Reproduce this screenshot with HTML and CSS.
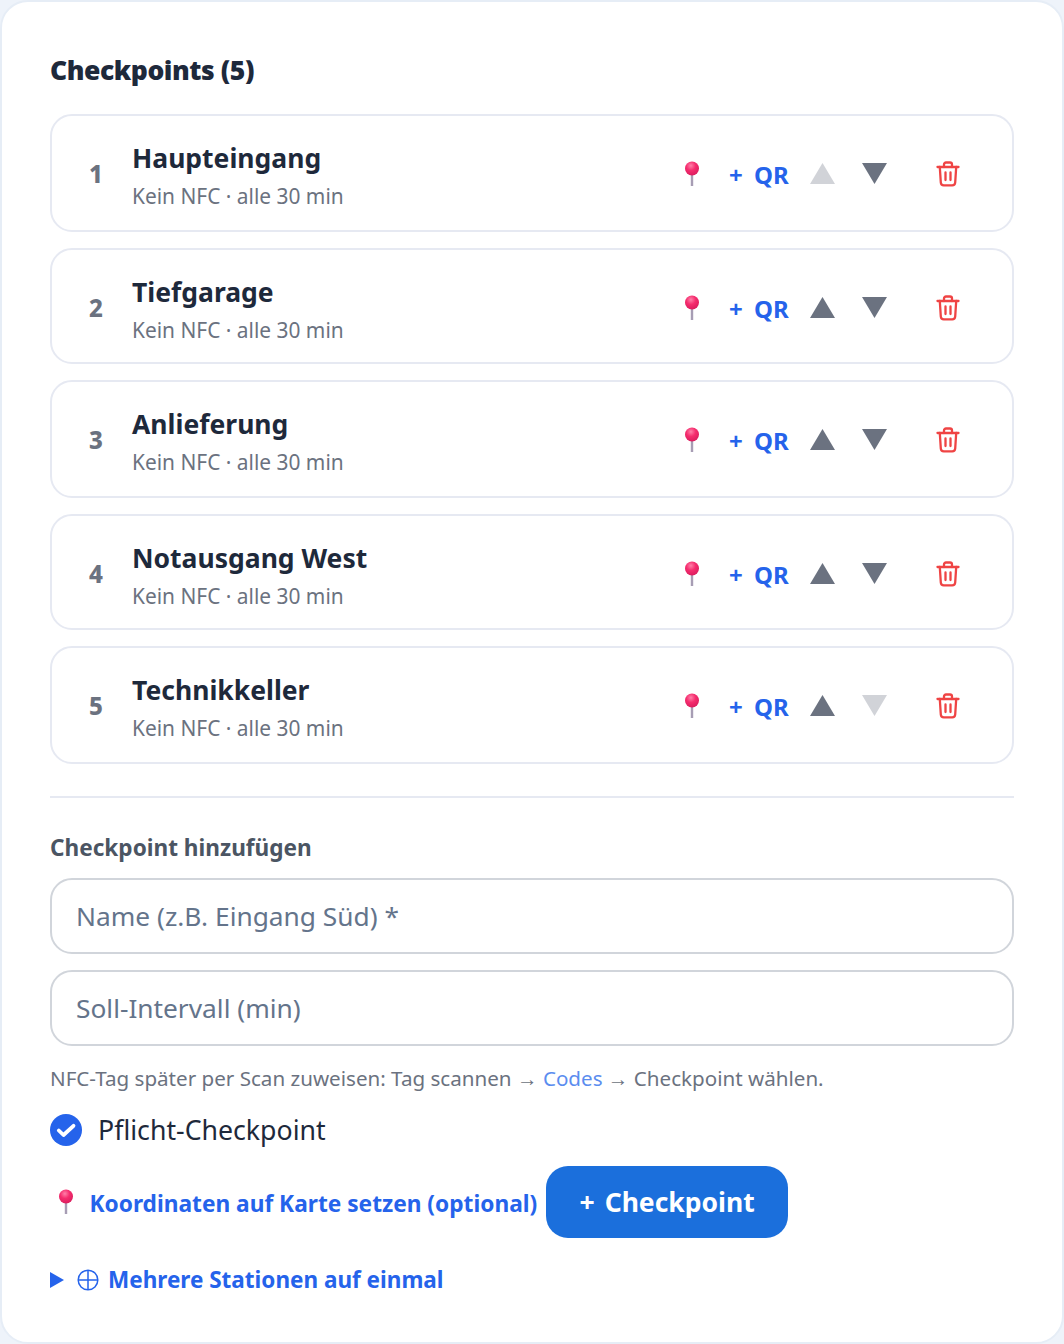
FILE: index.html
```html
<!DOCTYPE html>
<html lang="de">
<head>
  <meta charset="UTF-8">
  <title>Checkpoints</title>
  <link rel="stylesheet" href="styles.css">
</head>
<body>
  <svg class="defs" width="0" height="0">
    <defs>
      <radialGradient id="pinhead" cx="0.42" cy="0.3" r="0.75">
        <stop offset="0" stop-color="#ff7fa8"/>
        <stop offset="0.45" stop-color="#f52d6e"/>
        <stop offset="1" stop-color="#d81b5c"/>
      </radialGradient>
      <symbol id="pin" viewBox="0 0 16 26">
        <rect x="6.8" y="10" width="2.4" height="15" fill="#a79db4"/>
        <circle cx="8" cy="7.5" r="7" fill="url(#pinhead)"/>
      </symbol>
      <symbol id="trash" viewBox="0 0 24 26">
        <g fill="none" stroke="#ef4444" stroke-width="2.3" stroke-linecap="round" stroke-linejoin="round">
          <path d="M1.5 6h21"/>
          <path d="M8 6V3.5A2 2 0 0 1 10 1.5h4a2 2 0 0 1 2 2V6"/>
          <path d="M3.8 6l1 15.5a3 3 0 0 0 3 2.8h8.4a3 3 0 0 0 3-2.8l1-15.5"/>
          <path d="M9.5 11.5v7.5M14.5 11.5v7.5"/>
        </g>
      </symbol>
    </defs>
  </svg>

  <main class="card">
    <h2 class="title">Checkpoints (5)</h2>

    <ul class="list">
      <li class="row">
        <span class="num">1</span>
        <div class="info">
          <div class="name">Haupteingang</div>
          <div class="meta">Kein NFC · alle 30 min</div>
        </div>
        <div class="actions">
          <svg class="pin"><use href="#pin"/></svg>
          <span class="qr">+ QR</span>
          <svg class="arrow off" viewBox="0 0 25 21"><polygon points="12.5,0 25,21 0,21"/></svg>
          <svg class="arrow" viewBox="0 0 25 21"><polygon points="0,0 25,0 12.5,21"/></svg>
          <svg class="trash"><use href="#trash"/></svg>
        </div>
      </li>
      <li class="row">
        <span class="num">2</span>
        <div class="info">
          <div class="name">Tiefgarage</div>
          <div class="meta">Kein NFC · alle 30 min</div>
        </div>
        <div class="actions">
          <svg class="pin"><use href="#pin"/></svg>
          <span class="qr">+ QR</span>
          <svg class="arrow" viewBox="0 0 25 21"><polygon points="12.5,0 25,21 0,21"/></svg>
          <svg class="arrow" viewBox="0 0 25 21"><polygon points="0,0 25,0 12.5,21"/></svg>
          <svg class="trash"><use href="#trash"/></svg>
        </div>
      </li>
      <li class="row">
        <span class="num">3</span>
        <div class="info">
          <div class="name">Anlieferung</div>
          <div class="meta">Kein NFC · alle 30 min</div>
        </div>
        <div class="actions">
          <svg class="pin"><use href="#pin"/></svg>
          <span class="qr">+ QR</span>
          <svg class="arrow" viewBox="0 0 25 21"><polygon points="12.5,0 25,21 0,21"/></svg>
          <svg class="arrow" viewBox="0 0 25 21"><polygon points="0,0 25,0 12.5,21"/></svg>
          <svg class="trash"><use href="#trash"/></svg>
        </div>
      </li>
      <li class="row">
        <span class="num">4</span>
        <div class="info">
          <div class="name">Notausgang West</div>
          <div class="meta">Kein NFC · alle 30 min</div>
        </div>
        <div class="actions">
          <svg class="pin"><use href="#pin"/></svg>
          <span class="qr">+ QR</span>
          <svg class="arrow" viewBox="0 0 25 21"><polygon points="12.5,0 25,21 0,21"/></svg>
          <svg class="arrow" viewBox="0 0 25 21"><polygon points="0,0 25,0 12.5,21"/></svg>
          <svg class="trash"><use href="#trash"/></svg>
        </div>
      </li>
      <li class="row">
        <span class="num">5</span>
        <div class="info">
          <div class="name">Technikkeller</div>
          <div class="meta">Kein NFC · alle 30 min</div>
        </div>
        <div class="actions">
          <svg class="pin"><use href="#pin"/></svg>
          <span class="qr">+ QR</span>
          <svg class="arrow" viewBox="0 0 25 21"><polygon points="12.5,0 25,21 0,21"/></svg>
          <svg class="arrow off" viewBox="0 0 25 21"><polygon points="0,0 25,0 12.5,21"/></svg>
          <svg class="trash"><use href="#trash"/></svg>
        </div>
      </li>
    </ul>

    <hr class="divider">

    <h3 class="subtitle">Checkpoint hinzufügen</h3>
    <input class="field" type="text" placeholder="Name (z.B. Eingang Süd) *">
    <input class="field" type="text" placeholder="Soll-Intervall (min)">
    <p class="hint">NFC-Tag später per Scan zuweisen: Tag scannen → <span class="hint-link">Codes</span> → Checkpoint wählen.</p>

    <label class="check">
      <svg class="check-box" viewBox="0 0 32 32">
        <circle cx="16" cy="16" r="16" fill="#2563eb"/>
        <path d="M8.8 16.5l4.7 4.5 10-9.2" fill="none" stroke="#fff" stroke-width="3.8" stroke-linecap="round" stroke-linejoin="round"/>
      </svg>
      <span>Pflicht-Checkpoint</span>
    </label>

    <div class="submit-row">
      <svg class="pin pin-big"><use href="#pin"/></svg>
      <span class="coords">Koordinaten auf Karte setzen (optional)</span>
      <button class="add-btn">+ Checkpoint</button>
    </div>

    <div class="bulk">
      <svg class="bulk-arrow" viewBox="0 0 14 16"><polygon points="0,0 14,8 0,16"/></svg>
      <svg class="bulk-icon" viewBox="0 0 22 22">
        <g fill="none" stroke="#2563eb" stroke-width="1.5">
          <circle cx="11" cy="11" r="9.8"/>
          <path d="M11 1v20M1 11h20"/>
        </g>
      </svg>
      <span>Mehrere Stationen auf einmal</span>
    </div>
  </main>
</body>
</html>
```

FILE: styles.css
```css
* {
  box-sizing: border-box;
}
html, body {
  margin: 0;
  padding: 0;
}
body {
  background-color: #eef3fa;
  color: #1e293b;
  font-family: "Noto Sans", sans-serif;
}
.defs {
  display: block;
  height: 0;
}
.card {
  width: 1064px;
  height: 1344px;
  padding: 47px 48px 0;
  background-color: #fff;
  border: 2px solid #e6edf6;
  border-radius: 28px;
}
.title {
  margin: 0 0 23px;
  font-size: 26.5px;
  line-height: 42px;
  font-weight: 900;
  letter-spacing: -0.45px;
  color: #1e293b;
}
.list {
  list-style: none;
  margin: 0;
  padding: 0;
  display: flex;
  flex-direction: column;
  gap: 16px;
}
.row {
  display: flex;
  align-items: center;
  height: 118px;
  padding: 0 36px 0 37px;
  border: 2px solid #e6e9f2;
  border-radius: 22px;
}
/* rows land on alternating pixel heights in the original */
.row:nth-child(even) {
  height: 116px;
  padding-top: 2px;
}
.num {
  width: 43px;
  font-size: 24px;
  font-weight: 800;
  color: #6b7280;
}
.info {
  flex: 1;
  margin-top: 9px;
}
.name {
  font-size: 26.5px;
  line-height: 37px;
  font-weight: 700;
  color: #1e293b;
}
.meta {
  font-size: 20.9px;
  line-height: 38px;
  color: #6b7280;
}
.actions {
  display: flex;
  align-items: center;
  padding-right: 16px;
}
.pin {
  width: 16px;
  height: 26px;
  margin-top: 1px;
}
.qr {
  margin-left: 29px;
  margin-top: 3px;
  width: 68px;
  font-size: 24px;
  font-weight: 700;
  word-spacing: 5px;
  color: #2563eb;
}
.arrow {
  width: 25px;
  height: 21px;
  margin: 0 14px 0 13px;
  fill: #6b7280;
}
.arrow.off {
  fill: #d1d3d8;
}
.trash {
  width: 24px;
  height: 26px;
  margin-left: 35px;
  margin-top: 1px;
}
.divider {
  margin: 32px 0 0;
  border: 0;
  border-top: 2px solid #e6e9f2;
}
.subtitle {
  margin: 33px 0 13px;
  font-size: 22.6px;
  line-height: 34px;
  font-weight: 700;
  color: #4b5563;
}
.field {
  display: block;
  width: 100%;
  height: 76px;
  margin-bottom: 16px;
  padding: 0 24px;
  border: 2px solid #d1d5db;
  border-radius: 22px;
  background: #fff;
  font-family: inherit;
  font-size: 26.3px;
  color: #1e293b;
}
.field::placeholder {
  color: #64748b;
  opacity: 1;
}
.hint {
  margin: 0;
  font-family: "Noto Sans", "Liberation Sans", sans-serif;
  font-size: 20.6px;
  line-height: 32px;
  color: #6b7280;
}
.hint-link {
  color: #5b8def;
}
.check {
  display: flex;
  align-items: center;
  gap: 16px;
  margin-top: 16px;
  font-size: 26.7px;
  line-height: 40px;
  color: #1e293b;
}
.check-box {
  width: 32px;
  height: 32px;
}
.submit-row {
  display: flex;
  align-items: center;
  margin-top: 16px;
}
.pin-big {
  margin-left: 8px;
  margin-top: 0;
}
.coords {
  margin-left: 15.5px;
  margin-top: 2px;
  font-size: 22.7px;
  font-weight: 700;
  color: #2563eb;
}
.add-btn {
  width: 242px;
  height: 72px;
  margin-left: 9px;
  padding: 0;
  border: none;
  border-radius: 22px;
  background-color: #1b6fdc;
  color: #fff;
  font-family: inherit;
  font-size: 26.5px;
  font-weight: 700;
  word-spacing: 3px;
}
.bulk {
  display: flex;
  align-items: center;
  margin-top: 24px;
  font-size: 22.5px;
  line-height: 36px;
  font-weight: 700;
  color: #2563eb;
}
.bulk-arrow {
  width: 14px;
  height: 16px;
  fill: #2563eb;
}
.bulk-icon {
  width: 22px;
  height: 22px;
  margin-left: 13px;
  margin-right: 9px;
}
```
